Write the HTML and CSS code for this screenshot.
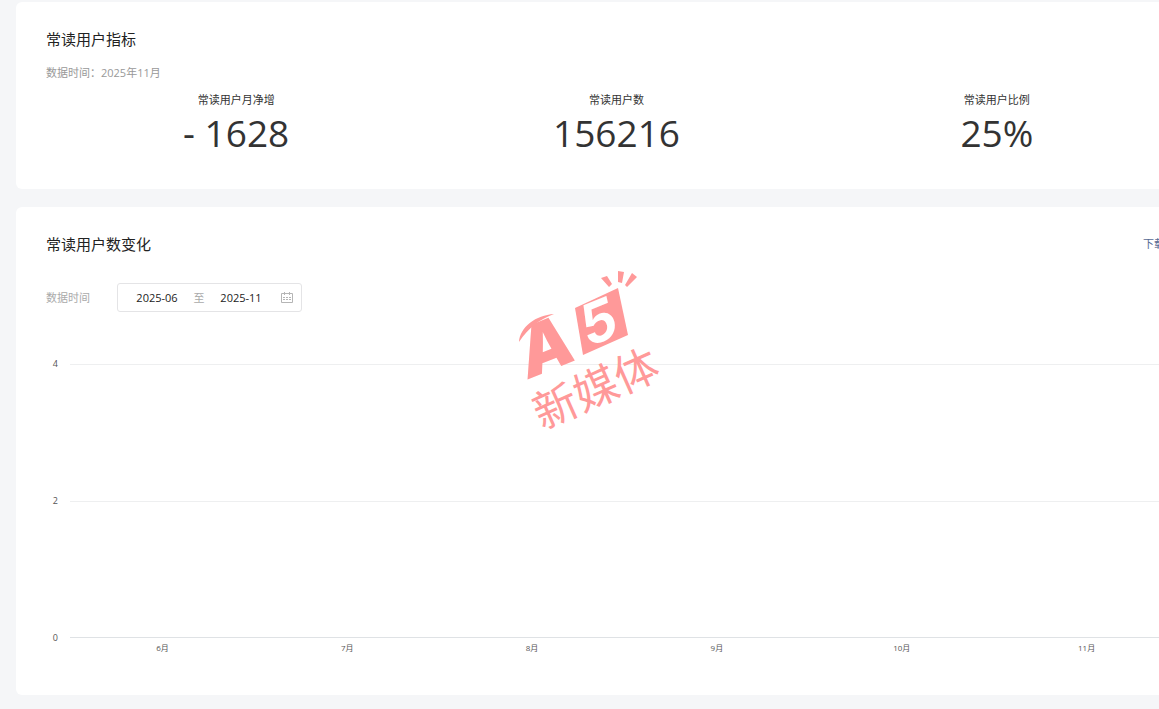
FILE: index.html
```
<!DOCTYPE html>
<html lang="zh-CN">
<head>
    <meta charset="UTF-8">
    <meta name="viewport" content="width=device-width, initial-scale=1.0">
    <title>常读用户</title>
    <link rel="stylesheet" href="styles.css">
</head>
<body>

<main class="page">
    <section class="card">
        <h2>常读用户指标</h2>
        <p class="data-time">数据时间：2025年11月</p>
        <dl class="metrics">
            <div class="metric">
                <dt>常读用户月净增</dt>
                <dd>- 1628</dd>
            </div>
            <div class="metric">
                <dt>常读用户数</dt>
                <dd>156216</dd>
            </div>
            <div class="metric">
                <dt>常读用户比例</dt>
                <dd>25%</dd>
            </div>
        </dl>
    </section>

    <section class="card chart-card">
        <div class="card-header">
            <h2>常读用户数变化</h2>
            <a class="download" href="#">下载表格</a>
        </div>

        <form class="filter">
            <label for="startMonth">数据时间</label>
            <div class="range-picker">
                <input type="text" id="startMonth" value="2025-06">
                <span class="separator">至</span>
                <input type="text" id="endMonth" value="2025-11" aria-label="结束月份">
                <button type="button" class="calendar" aria-label="选择月份">
                    <svg viewBox="0 0 12 11" width="12" height="11" fill="none" stroke="#b5b5b5">
                        <path d="M0.5 1.5h11v9H0.5zM3.5 0v3M8.5 0v3"/>
                        <path d="M2 5.5h8M2 7.5h8" stroke-dasharray="2 1"/>
                    </svg>
                </button>
            </div>
        </form>

        <div class="chart">
            <div class="y-axis">
                <span>4</span>
                <span>2</span>
                <span>0</span>
            </div>
            <div class="plot">
                <div class="band"></div>
                <div class="band"></div>
            </div>
            <div class="x-axis">
                <span>6月</span>
                <span>7月</span>
                <span>8月</span>
                <span>9月</span>
                <span>10月</span>
                <span>11月</span>
            </div>
        </div>
    </section>
</main>

<svg class="watermark" viewBox="0 0 180 180" width="180" height="180" role="img" aria-label="A5新媒体">
    <!-- rays -->
    <path d="M101 18l6-2 5 8-3 3zM118 11l6 1-2 11-4-1zM132 13l5 4-10 10-2-2z"/>
    <!-- roof line -->
    <path d="M19 82C20 67 36 55 54 54C39 60 29 67 19 82z"/>
    <text class="mark" transform="translate(29 119) rotate(-22)">A</text>
    <!-- panel behind the digit -->
    <path d="M75 48L118 28L128 75L83 95z"/>
    <text class="digit" transform="translate(89 87) rotate(-22)">5</text>
    <text class="brand" transform="translate(42 170) rotate(-24)">新媒体</text>
</svg>

</body>
</html>
```
FILE: styles.css
```
* {
    box-sizing: border-box;
}
body {
    margin: 0;
    background-color: #f5f6f8;
    color: #333;
    font-family: "Open Sans", "Noto Sans CJK SC", sans-serif;
    font-size: 11px;
    line-height: 16px;
    overflow-x: hidden;
}
h2, p, dl, dd {
    margin: 0;
}
.page {
    display: flex;
    flex-direction: column;
    gap: 18px;
    padding: 2px 0 14px 16px;
    margin-right: -58px;
}
.card {
    padding: 25px 30px 31px;
    background-color: #fff;
    border-radius: 6px;
}
.chart-card {
    padding-bottom: 39px;
}
h2 {
    color: #222;
    font-size: 15px;
    font-weight: 400;
    line-height: 24px;
}
.data-time {
    margin-top: 14px;
    color: #999;
}
.metrics {
    display: grid;
    grid-template-columns: repeat(3, 1fr);
    margin-top: 11px;
    text-align: center;
}
.metric dd {
    font-size: 37px;
    line-height: 50px;
}
.card-header {
    display: flex;
    justify-content: space-between;
    align-items: center;
}
.download {
    color: #576b95;
    text-decoration: none;
}
.filter {
    display: flex;
    align-items: center;
    gap: 27px;
    margin-top: 27px;
    color: #aaa;
}
.range-picker {
    display: flex;
    align-items: center;
    height: 29px;
    padding: 0 8px;
    border: 1px solid #e4e4e6;
    border-radius: 3px;
}
.range-picker input {
    width: 62px;
    padding: 0;
    border: none;
    outline: none;
    background: none;
    color: #222;
    font: inherit;
    text-align: center;
}
.separator {
    width: 22px;
    text-align: center;
}
.calendar {
    display: flex;
    margin-left: 9px;
    padding: 0;
    border: none;
    background: none;
    cursor: pointer;
}
.chart {
    display: grid;
    grid-template-columns: 24px 1fr;
    margin-top: 52px;
    color: #555;
    font-size: 8px;
}
.y-axis {
    display: flex;
    flex-direction: column;
    justify-content: space-between;
    margin: -8px 0;
    padding-right: 12px;
    font-size: 9px;
    text-align: right;
}
.plot {
    display: flex;
    flex-direction: column;
    height: 274px;
    border-bottom: 1px solid #dfe2e5;
}
.band {
    flex: 1;
    border-top: 1px solid #eeeff0;
}
.x-axis {
    display: grid;
    grid-column: 2;
    grid-template-columns: repeat(6, 1fr);
    margin: 2px 8px 0 0;
    text-align: center;
}
.watermark {
    position: absolute;
    top: 260px;
    left: 500px;
    fill: #ff9999;
    pointer-events: none;
}
.mark {
    font-family: Inter, sans-serif;
    font-size: 68px;
    font-style: italic;
    font-weight: 900;
}
.digit {
    fill: #fff;
    font-family: Inter, sans-serif;
    font-size: 56px;
    font-style: italic;
    font-weight: 700;
}
.brand {
    font-family: "Noto Sans CJK SC", sans-serif;
    font-size: 44px;
    font-weight: 400;
}
```
